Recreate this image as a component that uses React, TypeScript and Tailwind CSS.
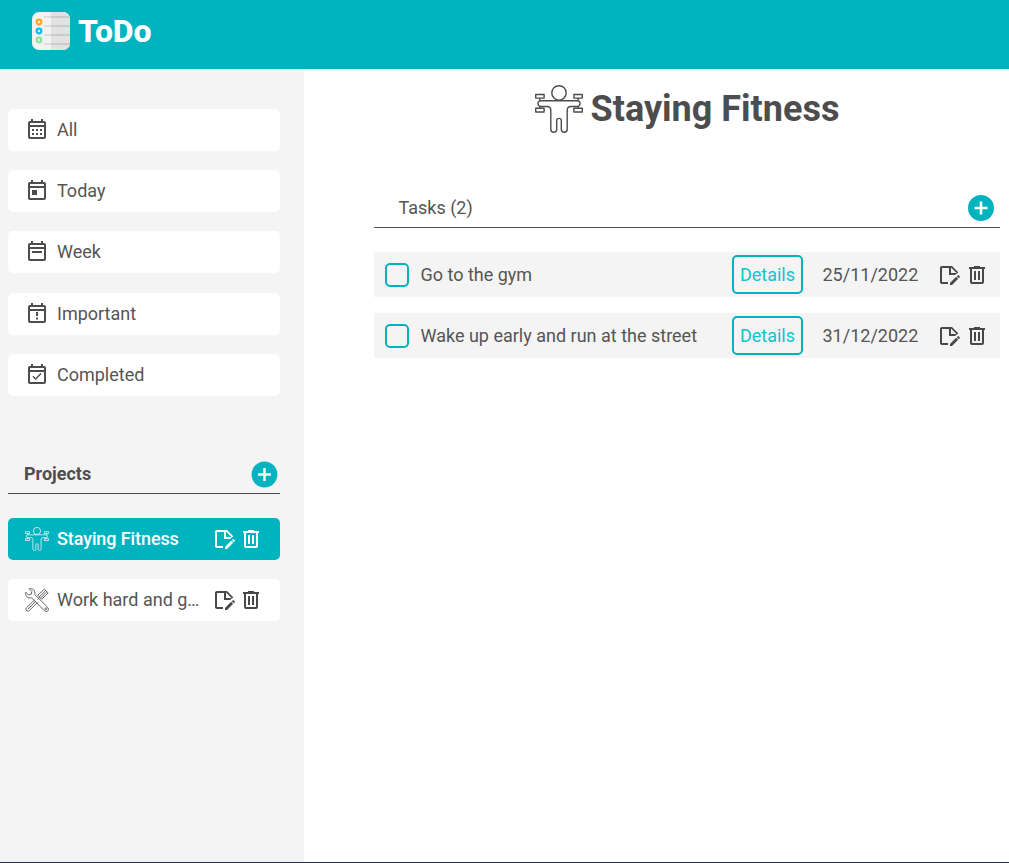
import type { ReactNode } from "react";

function Glyph({ d, size = 24, className = "" }: { d: string; size?: number; className?: string }) {
  return (
    <svg viewBox="0 0 24 24" width={size} height={size} fill="currentColor" className={`shrink-0 ${className}`}>
      <path d={d} />
    </svg>
  );
}

const FRAME =
  "M21 5V19C21 20.11 20.11 21 19 21H5C3.89 21 3 20.1 3 19V5C3 3.9 3.9 3 5 3H6V1H8V3H16V1H18V3H19C20.11 3 21 3.9 21 5M5 7H19V5H5V7M19 19V9H5V19H19";
const PLUS =
  "M17 13H13V17H11V13H7V11H11V7H13V11H17M12 2A10 10 0 0 0 2 12A10 10 0 0 0 12 22A10 10 0 0 0 22 12A10 10 0 0 0 12 2Z";
const EDIT =
  "M18.13 12L19.39 10.74C19.83 10.3 20.39 10.06 21 10V9L15 3H5C3.89 3 3 3.89 3 5V19C3 20.1 3.89 21 5 21H11V19.13L11.13 19H5V5H12V12H18.13M14 4.5L19.5 10H14V4.5M19.13 13.83L21.17 15.87L15.04 22H13V19.96L19.13 13.83M22.85 14.19L21.87 15.17L19.83 13.13L20.81 12.15C21 11.95 21.33 11.95 21.53 12.15L22.85 13.47C23.05 13.67 23.05 14 22.85 14.19Z";
const TRASH =
  "M9 3V4H4V6H5V19A2 2 0 0 0 7 21H17A2 2 0 0 0 19 19V6H20V4H15V3H9M7 6H17V19H7V6M9 8V17H11V8H9M13 8V17H15V8H13Z";

const filters = [
  {
    label: "All",
    d: "M7 11H9V13H7V11M15 13V11H17V13H15M11 13V11H13V13H11M7 15H9V17H7V15M15 17V15H17V17H15M11 17V15H13V17H11Z",
  },
  { label: "Today", d: "M7 11H12V16H7Z" },
  { label: "Week", d: "M7 11H17V13H7Z" },
  { label: "Important", d: "M11 10H13V14H11ZM11 15.5H13V17.5H11Z" },
  { label: "Completed", d: "M16.53 11.06L15.47 10L10.59 14.88L8.47 12.76L7.41 13.82L10.59 17Z" },
];

const tasks = [
  { title: "Go to the gym", date: "25/11/2022" },
  { title: "Wake up early and run at the street", date: "31/12/2022" },
];

function Lifter({ size }: { size: number }) {
  return (
    <svg
      viewBox="0 0 48 48"
      width={size}
      height={size}
      fill="none"
      stroke="currentColor"
      strokeWidth="1.4"
      strokeLinejoin="round"
      className="shrink-0"
    >
      <circle cx="24" cy="7.9" r="7.2" />
      <path d="M.7 9.5H9.1V13.1H.7ZM38.9 9.5H47.3V13.1H38.9ZM.7 23.3H9.1V27H.7ZM38.9 23.3H47.3V27H38.9Z" />
      <path d="M4.9 13.1V15.8M43.1 13.1V15.8M4.9 21V23.3M43.1 21V23.3" />
      <path d="M5.7 15.7H42.3C46 15.7 46 21.5 42.3 21.5H36C33.5 21.5 32.2 23 32.2 25.4V44.2C32.2 48.3 26.3 48.3 26.3 44.2V35.2C26.3 32.7 21.7 32.7 21.7 35.2V44.2C21.7 48.3 15.8 48.3 15.8 44.2V25.4C15.8 23 14.5 21.5 12 21.5H5.7C2 21.5 2 15.7 5.7 15.7Z" />
    </svg>
  );
}

function Tools() {
  return (
    <svg
      viewBox="0 0 24 24"
      width="24"
      height="24"
      fill="none"
      stroke="currentColor"
      strokeWidth=".9"
      strokeLinejoin="round"
      className="shrink-0"
    >
      <path d="M4.2.8C7.7-.2 10.9 2.8 9.8 6.6L22.7 19.4C25 22 22 25 19.4 22.7L6.6 9.8C2.8 10.9-.2 7.7.8 4.2L3.5 6.9L6.2 6.2L6.9 3.5Z" />
      <circle cx="20.9" cy="20.9" r="1" />
      <path d="M12.8 7.3L19.3 1.1L23.2 4.9L16.7 11.3ZM14.3 8.8L20.5 2.7M15.5 10L21.8 3.8M14.7 9.3L12.5 11.5M11 13L3 21.1M12.6 14.3L3.7 23.1L1.2 22.7L1 20.4L9.8 11.6" />
    </svg>
  );
}

function Logo() {
  const lines = [5, 14, 23, 32];
  const dots = [
    { y: 10, color: "#ffa91e" },
    { y: 19, color: "#08bdfa" },
    { y: 28, color: "#8fe39a" },
  ];
  return (
    <svg viewBox="0 0 38 38" width="38" height="38" className="shrink-0">
      <rect width="38" height="38" rx="7" fill="#f2f2f2" />
      <path d="M19 0H31A7 7 0 0 1 38 7V31A7 7 0 0 1 31 38H19Z" fill="#e2e2e2" />
      {lines.map((y) => (
        <g key={y}>
          <rect x="12" y={y - 1} width="7" height="2" fill="#dfdfdf" />
          <rect x="19" y={y - 1} width="19" height="2" fill="#cbcbcb" />
        </g>
      ))}
      {dots.map((dot) => (
        <circle key={dot.y} cx="7" cy={dot.y} r="2.35" fill="#f5f5f5" stroke={dot.color} strokeWidth="2.2" />
      ))}
    </svg>
  );
}

function Actions({ className = "" }: { className?: string }) {
  return (
    <div className={`flex text-[#484848] ${className}`}>
      <button><Glyph d={EDIT} /></button>
      <button><Glyph d={TRASH} /></button>
    </div>
  );
}

function Project({ icon, name, active = false }: { icon: ReactNode; name: string; active?: boolean }) {
  return (
    <li
      className={`flex h-[42px] items-center rounded-[5px] px-[17px] ${
        active ? "bg-[#00b4bf] text-white" : "bg-white"
      }`}
    >
      {icon}
      <span className={`ml-2 w-[143px] truncate pb-px ${active ? "font-medium tracking-[-0.1px]" : ""}`}>{name}</span>
      <Actions className={`ml-3 gap-[3px] ${active ? "text-white!" : ""}`} />
    </li>
  );
}

export default function App() {
  return (
    <div className="flex h-[863px] flex-col border-b border-[#243044] bg-white font-['Roboto',sans-serif] text-[18px] leading-[21px] text-[#555]">
      <header className="flex h-[69px] shrink-0 items-start bg-[#00b4bf] pt-3 pl-8">
        <Logo />
        <h1 className="ml-2 text-[32px] leading-[38px] font-extrabold tracking-[-0.1px] text-white">ToDo</h1>
      </header>
      <div className="flex min-h-0 flex-1">
        <aside className="w-[304px] shrink-0 bg-[#f4f4f4] pt-10 pr-6 pl-2">
          <ul className="flex flex-col gap-[19.2px]">
            {filters.map((filter) => (
              <li key={filter.label} className="flex h-[42.04px] items-center gap-2 rounded-[5px] bg-white pl-[17px]">
                <Glyph className="text-[#4d4d4d]" d={`${FRAME}${filter.d}`} />
                <span className="pb-px">{filter.label}</span>
              </li>
            ))}
          </ul>
          <div className="mt-[60px] flex h-[38px] items-center justify-between border-b border-[#4d4d4d] pl-4">
            <h2 className="pb-0.5 font-bold text-[#4d4d4d]">Projects</h2>
            <button className="text-[#00b4bf]"><Glyph d={PLUS} size={31} /></button>
          </div>
          <ul className="mt-6 flex flex-col gap-[19px]">
            <Project active icon={<Lifter size={24} />} name="Staying Fitness" />
            <Project icon={<Tools />} name="Work hard and get rich" />
          </ul>
        </aside>
        <main className="min-w-0 flex-1 pt-4 pr-[9px] pl-[70px]">
          <div className="flex h-12 items-center justify-center gap-2 text-[#4d4d4d]">
            <Lifter size={48} />
            <h2 className="text-[36px] leading-[48px] font-bold">Staying Fitness</h2>
          </div>
          <div className="mt-[55px] flex h-10 items-center justify-between border-b border-[#4d4d4d] pr-[3px] pl-[24.5px]">
            <span>Tasks (2)</span>
            <button className="text-[#00b4bf]"><Glyph d={PLUS} size={32} className="scale-[0.975]" /></button>
          </div>
          <ul className="mt-6 flex flex-col gap-4">
            {tasks.map((task) => (
              <li key={task.title} className="flex h-[45px] items-center bg-[#f4f4f4] px-[11px]">
                <span className="size-6 shrink-0 rounded-[5px] border-2 border-[#00b4bf]" />
                <span className="ml-[11.5px] flex-1">{task.title}</span>
                <button className="h-[39px] w-[71px] rounded-[5px] border-2 border-[#00b4bf] text-[#0cc5cf]">Details</button>
                <span className="ml-[19.5px] w-[114.5px]">{task.date}</span>
                <Actions className="gap-1" />
              </li>
            ))}
          </ul>
        </main>
      </div>
    </div>
  );
}
